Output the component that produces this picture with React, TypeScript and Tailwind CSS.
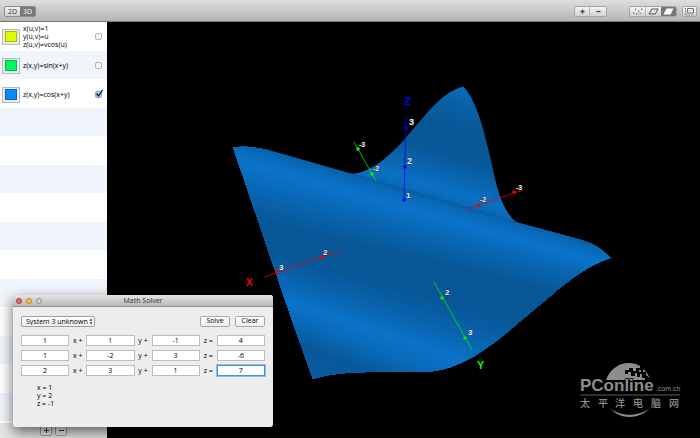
import React, { useState } from 'react';

interface Equation {
  lines: string[];
  color: string;
  visible: boolean;
}

interface Band {
  left: number;
  right: number;
  color: [number, number, number];
}

interface Tick {
  x: number;
  y: number;
  label: string;
  lx: number;
  ly: number;
  size?: number;
}

interface Axis {
  color: string;
  from: [number, number];
  to: [number, number];
  ticks: Tick[];
}

const EQUATIONS: Equation[] = [
  { lines: ['x(u,v)=1', 'y(u,v)=u', 'z(u,v)=vcos(u)'], color: 'bg-[#dcfa00]', visible: false },
  { lines: ['z(x,y)=sin(x+y)'], color: 'bg-[#00f763]', visible: false },
  { lines: ['z(x,y)=cos(x+y)'], color: 'bg-[#0a8bfb]', visible: true },
];

const SYSTEM = [
  ['1', '1', '-1', '4'],
  ['1', '-2', '3', '-6'],
  ['2', '3', '1', '7'],
];

const OPERATORS = ['x +', 'y +', 'z ='];

// Shading lines of the front sheet: height at both sides of the view
const BANDS: Band[] = [
  { left: 134, right: 249, color: [9, 91, 160] },
  { left: 140, right: 255, color: [10, 104, 182] },
  { left: 154, right: 267, color: [11, 116, 202] },
  { left: 182, right: 286, color: [9, 102, 177] },
  { left: 210, right: 306, color: [8, 88, 152] },
  { left: 238, right: 350, color: [8, 88, 152] },
  { left: 255, right: 380, color: [9, 99, 172] },
  { left: 278, right: 414, color: [11, 115, 200] },
  { left: 292, right: 442, color: [10, 106, 184] },
  { left: 312, right: 470, color: [8, 89, 154] },
  { left: 350, right: 520, color: [9, 93, 161] },
];

const VIEW_LEFT = 220;
const VIEW_RIGHT = 620;
const STEPS = 14;

const AXES: Axis[] = [
  {
    color: '#0000f5',
    from: [406, 116],
    to: [404, 200],
    ticks: [
      { x: 406, y: 128, label: '3', lx: 409, ly: 125, size: 9 },
      { x: 405, y: 167, label: '2', lx: 407, ly: 164, size: 9 },
      { x: 404, y: 200, label: '1', lx: 406, ly: 198, size: 8 },
    ],
  },
  {
    color: '#00f000',
    from: [354, 142],
    to: [376, 181],
    ticks: [
      { x: 358, y: 149, label: '-3', lx: 359, ly: 147, size: 7 },
      { x: 372, y: 174, label: '-2', lx: 373, ly: 171, size: 7 },
    ],
  },
  {
    color: '#f50000',
    from: [467, 209],
    to: [523, 190],
    ticks: [
      { x: 479, y: 205, label: '-2', lx: 480, ly: 202, size: 7 },
      { x: 514, y: 192, label: '-3', lx: 516, ly: 190, size: 7 },
    ],
  },
  {
    color: '#f50000',
    from: [264, 277],
    to: [340, 251],
    ticks: [
      { x: 277, y: 272, label: '3', lx: 279, ly: 270 },
      { x: 321, y: 257, label: '2', lx: 323, ly: 255 },
    ],
  },
  {
    color: '#00f000',
    from: [434, 282],
    to: [472, 350],
    ticks: [
      { x: 442, y: 298, label: '2', lx: 445, ly: 295 },
      { x: 465, y: 338, label: '3', lx: 468, ly: 335 },
    ],
  },
];

const mix = (a: number, b: number, t: number) => a + (b - a) * t;

const frontStrips = BANDS.slice(1).flatMap((next, i) => {
  const prev = BANDS[i];
  return Array.from({ length: STEPS }, (_, s) => {
    const t = s / STEPS;
    const rgb = prev.color.map((c, k) => Math.round(mix(c, next.color[k], t)));
    const yl = mix(prev.left, next.left, t);
    const yr = mix(prev.right, next.right, t);
    return {
      points: `${VIEW_LEFT},${yl} ${VIEW_RIGHT},${yr} ${VIEW_RIGHT},540 ${VIEW_LEFT},540`,
      fill: `rgb(${rgb.join(',')})`,
    };
  });
});

const FRONT =
  'M233 147.500C243 146 256 147 266 149.500L350 173.500L420 193.500L517 222.500L580 239.500C594 243.500 602 249 610.500 258C588 265 570 279 548 298C522 319 492 347 470 358.500C452 368 438 372 418 372C392 372.500 365 371 345 373C330 374.500 322 376 313 379C305 356 290 315 276 273C262 233 248 190 233 147.500Z';

const BACK =
  'M347 174C369 174 384 161 403 141C425 116 441 92 463.500 86.500C475 99 482 123 488 148C496 181 499 208 517 223L420 197Z';

function Surface() {
  return (
    <svg
      className="absolute inset-0 h-full w-full"
      viewBox="107 22 593 416"
      preserveAspectRatio="xMidYMid slice"
      role="img"
      aria-label="Plot of z = cos(x+y)"
      fontFamily='"Liberation Sans", Arial, sans-serif'
      fontWeight="bold"
    >
      <defs>
        <linearGradient id="back" gradientUnits="userSpaceOnUse" x1="458" y1="82" x2="425" y2="197">
          <stop offset="0" stopColor="#0a6dbd" />
          <stop offset="0.18" stopColor="#0960a6" />
          <stop offset="0.4" stopColor="#085795" />
          <stop offset="0.62" stopColor="#08599a" />
          <stop offset="0.9" stopColor="#0b70c3" />
          <stop offset="0.97" stopColor="#0a69b8" />
          <stop offset="1" stopColor="#095ca2" />
        </linearGradient>
        <clipPath id="front">
          <path d={FRONT} />
        </clipPath>
      </defs>

      <path d={BACK} fill="url(#back)" />
      <g clipPath="url(#front)">
        <path d={FRONT} fill="#095b9f" />
        {frontStrips.map((strip, i) => (
          <polygon key={i} points={strip.points} fill={strip.fill} />
        ))}
      </g>

      {AXES.map((axis, i) => (
        <g key={i}>
          <line
            x1={axis.from[0]}
            y1={axis.from[1]}
            x2={axis.to[0]}
            y2={axis.to[1]}
            stroke={axis.color}
            strokeWidth="0.9"
            strokeOpacity="0.85"
          />
          {axis.ticks.map((tick) => (
            <g key={tick.label}>
              <circle cx={tick.x} cy={tick.y} r="1.8" fill={axis.color} />
              <text
                x={tick.lx}
                y={tick.ly}
                fontSize={tick.size || 8}
                fill="#f2f2f2"
                stroke="#222"
                strokeWidth="1"
                strokeOpacity="0.6"
                paintOrder="stroke"
              >
                {tick.label}
              </text>
            </g>
          ))}
        </g>
      ))}

      <text x="404" y="105" fontSize="11" fill="#0000ff">Z</text>
      <text x="246" y="286" fontSize="10" fill="#ff0000">X</text>
      <text x="477" y="369" fontSize="11" fill="#00ff00">Y</text>
    </svg>
  );
}

function Watermark() {
  return (
    <svg
      className="absolute right-[18px] bottom-[18px] h-[60px] w-[104px]"
      viewBox="578 360 104 60"
      role="img"
      aria-label="PConline"
      fill="#8d8d8d"
    >
      <path d="M606 380C610 369 619 363 629 363C633 363 637 364 640 366V368H636V371H633V368H629V370H625V374H628V372H631V376H635V373H637V377H640V374H642V378H645V380Z" />
      <path d="M639 370h2v2h-2zM643 369C646 371 648 374 649.500 378L646 375V372H643Z" />
      <path d="M610 408C620 420 639 420 650 408C639 417 620 417 610 408Z" />
      <text
        x="580"
        y="391"
        fontFamily='"Liberation Sans", Arial, sans-serif'
        fontSize="17"
        fontWeight="bold"
        stroke="#000"
        strokeWidth="1.500"
        paintOrder="stroke"
      >
        PConline
      </text>
      <text x="656" y="391" fontFamily='"Liberation Sans", Arial, sans-serif' fontSize="7">
        .com.cn
      </text>
      <rect x="580" y="394.500" width="100" height="1" opacity="0.65" />
      <text
        x="580 598 615 633 651 669"
        y="407"
        fontFamily='"Noto Sans CJK SC", sans-serif'
        fontSize="10"
        fontWeight="500"
      >
        太平洋电脑网
      </text>
    </svg>
  );
}

function Toolbar() {
  const [mode, setMode] = useState('3D');

  return (
    <header className="flex h-[22px] shrink-0 items-center justify-between border-b border-[#777] bg-linear-to-b from-[#dedede] to-[#b5b5b5] pt-[2px] pr-[3px] pl-1">
      <div className="flex h-[11px] overflow-hidden rounded-[2px] border border-[#8c8c8c]">
        {['2D', '3D'].map((m) => (
          <button
            key={m}
            onClick={() => setMode(m)}
            className={`flex w-[15px] items-center justify-center leading-none ${
              m === mode ? 'bg-[#777] text-white' : 'bg-linear-to-b from-[#f4f4f4] to-[#d0d0d0] text-[#333]'
            }`}
          >
            {m}
          </button>
        ))}
      </div>

      <div className="flex items-center">
        <div className="mr-[22px] flex h-[11px] divide-x divide-[#bbb] rounded-[2px] border border-[#a5a5a5] bg-linear-to-b from-[#f5f5f5] to-[#d2d2d2]">
          <button aria-label="Zoom in" className="flex w-[15px] items-center justify-center">
            <svg className="h-[5px] w-[5px]" viewBox="0 0 5 5" stroke="#444" strokeWidth="1.300">
              <path d="M2.500 0.500v4M0.500 2.500h4" />
            </svg>
          </button>
          <button aria-label="Zoom out" className="flex w-4 items-center justify-center">
            <svg className="h-[5px] w-[5px]" viewBox="0 0 5 5" stroke="#444" strokeWidth="1.300">
              <path d="M0.500 2.500h4" />
            </svg>
          </button>
        </div>

        <div className="mr-[5px] flex h-[11px] overflow-hidden rounded-[2px] border border-[#a5a5a5] bg-linear-to-b from-[#f5f5f5] to-[#d2d2d2]">
          <button aria-label="Points" className="flex w-4 items-center justify-center border-r border-[#bbb]">
            <svg className="h-[9px] w-[13px]" viewBox="0 0 13 9" fill="#666">
              <path d="M4 1.500h1.200v1.200H4zM10 1.500h1.200v1.200H10zM7 3.500h1.200v1.200H7zM2 5.500h1.200v1.200H2zM5 6.500h1.200v1.200H5zM8.500 5.800h1.200v1.200H8.500z" />
            </svg>
          </button>
          <button aria-label="Wireframe" className="flex w-[15px] items-center justify-center">
            <svg className="h-[7px] w-[11px]" viewBox="0 0 11 7" fill="none" stroke="#555">
              <path d="M3.700 1h6.300l-2.700 5h-6.300z" />
            </svg>
          </button>
          <button aria-label="Solid" className="flex w-[15px] items-center justify-center bg-[#777]">
            <svg className="h-[7px] w-[11px]" viewBox="0 0 11 7" fill="#fff">
              <path d="M3.500 0.500h7l-3 6h-7z" />
            </svg>
          </button>
        </div>

        <button
          aria-label="Full screen"
          className="flex h-[11px] w-[15px] items-center justify-center rounded-[2px] border border-[#a5a5a5] bg-linear-to-b from-[#f5f5f5] to-[#d2d2d2]"
        >
          <svg className="h-[9px] w-[11px]" viewBox="0 0 11 9" fill="none" stroke="#777">
            <path d="M3.500 1.500h6v4.500h-6z" />
            <path d="M1.500 1v7h8.500" strokeDasharray="1.500 1" />
          </svg>
        </button>
      </div>
    </header>
  );
}

function Sidebar() {
  const [equations, setEquations] = useState(EQUATIONS);

  const toggle = (index: number) => {
    setEquations((prev) => prev.map((eq, i) => (i === index ? { ...eq, visible: !eq.visible } : eq)));
  };

  return (
    <aside className="flex w-[107px] shrink-0 flex-col bg-white">
      <ul className="min-h-0 flex-1 overflow-hidden bg-[repeating-linear-gradient(to_bottom,#fff_0px,#fff_29px,#f0f4fb_29px,#f0f4fb_57px)]">
        {equations.map((eq, index) => (
          <li key={eq.lines[0]} className="h-[29px]">
            <label className="flex h-full items-center pr-[5px] pl-[2px]">
              <span className="mr-[3px] flex h-4 w-[18px] items-center justify-center border border-[#b9b9b9] bg-[#ececec]">
                <span className={`h-[11px] w-3 border border-black/25 ${eq.color}`} />
              </span>
              <span className="flex-1 leading-[8px] whitespace-nowrap">
                {eq.lines.map((line) => (
                  <span key={line} className="block">{line}</span>
                ))}
              </span>
              <span className="relative flex">
                <input
                  type="checkbox"
                  checked={eq.visible}
                  onChange={() => toggle(index)}
                  className="h-[7px] w-[7px] appearance-none rounded-[2px] border border-[#b5b5b5] bg-[#f6f6f6] checked:border-[#7fa6dc] checked:bg-[#b5d5f8]"
                />
                {eq.visible && (
                  <svg className="pointer-events-none absolute -top-[2px] left-0 h-[9px] w-[9px]" viewBox="0 0 9 9" fill="none" stroke="#111" strokeWidth="1.300">
                    <path d="M1.500 4.500l2 2.500L7.500 1" />
                  </svg>
                )}
              </span>
            </label>
          </li>
        ))}
      </ul>
      <div className="flex h-[15px] items-center justify-center gap-[3px] bg-[#e6e6e6]">
        <button aria-label="Add equation" className="flex h-[11px] w-3 items-center justify-center rounded-[2px] border border-[#a0a0a0] bg-[#f0f0f0]">
          <svg className="h-[5px] w-[5px]" viewBox="0 0 5 5" stroke="#333"><path d="M2.500 0v5M0 2.500h5" /></svg>
        </button>
        <button aria-label="Remove equation" className="flex h-[11px] w-3 items-center justify-center rounded-[2px] border border-[#a0a0a0] bg-[#f0f0f0]">
          <svg className="h-[5px] w-[5px]" viewBox="0 0 5 5" stroke="#333"><path d="M0 2.500h5" /></svg>
        </button>
      </div>
    </aside>
  );
}

function MathSolver() {
  const [system, setSystem] = useState(SYSTEM);

  const setCell = (row: number, col: number, value: string) => {
    setSystem((prev) => prev.map((r, i) => (i === row ? r.map((c, j) => (j === col ? value : c)) : r)));
  };

  return (
    <section
      aria-label="Math Solver"
      className="absolute bottom-[11px] left-[13px] w-[260px] overflow-hidden rounded-[3px] bg-[#ededed] shadow-[0_5px_14px_rgba(0,0,0,0.6)]"
    >
      <div className="relative flex h-3 items-center justify-center border-b border-[#8f8f8f] bg-linear-to-b from-[#e4e4e4] to-[#b8b8b8]">
        <div className="absolute left-[3px] flex gap-1">
          <button aria-label="Close" className="h-[6px] w-[6px] rounded-full border border-[#a83a35] bg-[#f0645c]" />
          <button aria-label="Minimize" className="h-[6px] w-[6px] rounded-full border border-[#b98a2e] bg-[#fbc350]" />
          <button aria-label="Zoom" className="h-[6px] w-[6px] rounded-full border border-[#8f8f8f] bg-[#d6d6d6]" />
        </div>
        <h1 className="leading-none text-[#333]">Math Solver</h1>
      </div>

      <div className="px-2 pt-2 pb-[19px]">
        <div className="flex h-3 items-center gap-[5px]">
          <div className="relative mr-auto flex">
            <select
              aria-label="System type"
              className="h-[11px] w-[74px] appearance-none rounded-[2px] border border-[#a0a0a0] bg-linear-to-b from-white to-[#eee] pl-1 leading-none"
            >
              <option>System 3 unknown</option>
            </select>
            <svg className="pointer-events-none absolute top-[2px] right-[2px] h-[7px] w-[4px]" viewBox="0 0 4 7" fill="#333">
              <path d="M2 0.500l1.400 2.200H0.600zM2 6.500l1.400-2.200H0.600z" />
            </svg>
          </div>
          <button className="flex h-[11px] w-[30px] items-center justify-center rounded-[2px] border border-[#a8a8a8] bg-linear-to-b from-white to-[#eee]">
            Solve
          </button>
          <button className="flex h-[11px] w-[30px] items-center justify-center rounded-[2px] border border-[#a8a8a8] bg-linear-to-b from-white to-[#eee]">
            Clear
          </button>
        </div>

        <div className="mt-2 flex flex-col gap-1">
          {system.map((row, i) => (
            <div key={i} className="flex items-center">
              {row.map((value, j) => (
                <React.Fragment key={j}>
                  <input
                    type="text"
                    aria-label={`Row ${i + 1}, column ${j + 1}`}
                    value={value}
                    onChange={(e) => setCell(i, j, e.target.value)}
                    className={`h-[11px] w-12 min-w-0 flex-1 border bg-white text-center leading-none outline-none ${
                      i === 2 && j === 3 ? 'border-[#4a90d9] ring-1 ring-[#8dbdf0]' : 'border-[#bdbdbd]'
                    }`}
                  />
                  {j < 3 && <span className="w-[17px] text-center leading-none">{OPERATORS[j]}</span>}
                </React.Fragment>
              ))}
            </div>
          ))}
        </div>

        <output className="mt-2 block pl-4 leading-[8px]">
          <span className="block">x = 1</span>
          <span className="block">y = 2</span>
          <span className="block">z = -1</span>
        </output>
      </div>
    </section>
  );
}

export default function App() {
  return (
    <div className="relative flex h-screen flex-col overflow-hidden bg-black font-['Open_Sans','Noto_Sans',sans-serif] text-[7px] text-black">
      <Toolbar />
      <div className="flex min-h-0 flex-1">
        <Sidebar />
        <main className="relative min-w-0 flex-1 overflow-hidden bg-black">
          <Surface />
          <Watermark />
        </main>
      </div>
      <MathSolver />
    </div>
  );
}
